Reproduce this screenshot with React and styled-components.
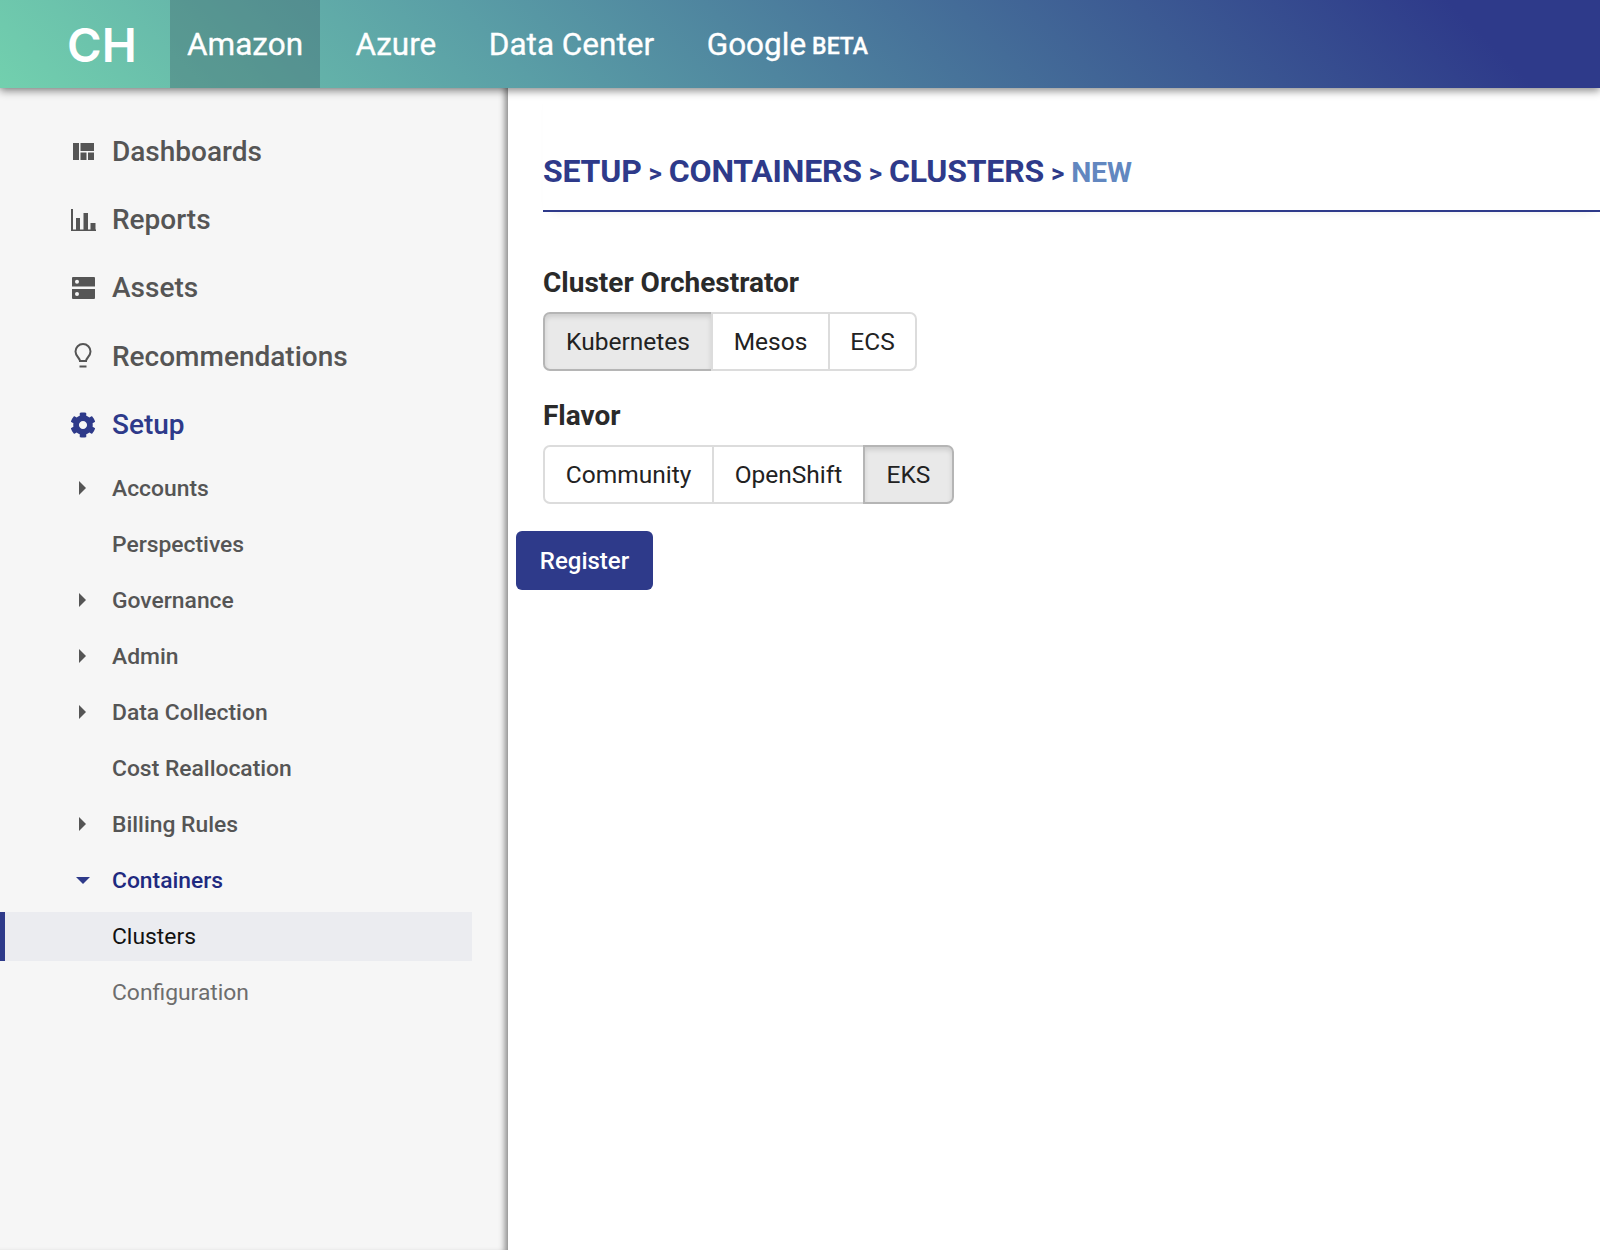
import React from "react";
import styled, { createGlobalStyle } from "styled-components";
import { FaCog } from "react-icons/fa";

const Global = createGlobalStyle`
  html, body {
    margin: 0;
    padding: 0;
    background: #fff;
    font-family: Roboto, "Liberation Sans", sans-serif;
  }
`;

const Page = styled.div`
  display: flex;
  flex-direction: column;
  min-height: 1250px;
  overflow: hidden;
`;

const Header = styled.header`
  position: relative;
  z-index: 2;
  display: flex;
  height: 88px;
  background: linear-gradient(45deg, #72d0ae 0%, #5a9ea6 32%, #2e3a8a 91%);
  box-shadow: 0 3px 8px rgba(0, 0, 0, 0.45);
`;

const Logo = styled.div`
  width: 170px;
  padding-left: 67px;
  box-sizing: border-box;
  display: flex;
  align-items: center;
  font-size: 47px;
  font-weight: 600;
  color: #fff;
  font-family: Inter, sans-serif;
`;

const Tab = styled.a`
  display: flex;
  align-items: center;
  padding: 0 17px;
  margin-right: 18.5px;
  font-size: 31.5px;
  color: #fff;
  -webkit-text-stroke: 0.3px #fff;
  background: ${(p) => (p.$active ? "rgba(60, 90, 100, 0.35)" : "transparent")};
  ${(p) => p.$active && "width: 150px; box-sizing: border-box;"}
`;

const Beta = styled.span`
  font-size: 23px;
  font-weight: 500;
  margin-left: 6px;
  margin-top: 5px;
`;

const Body = styled.div`
  display: flex;
  flex: 1;
`;

const Sidebar = styled.nav`
  position: relative;
  width: 508px;
  flex-shrink: 0;
  box-sizing: border-box;
  padding-top: 29px;
  background: #f6f6f6;
  box-shadow: inset -7px 0 6px -4px rgba(0, 0, 0, 0.45);
`;

const MainItem = styled.div`
  display: flex;
  align-items: center;
  height: 68.4px;
  padding-left: 70px;
  font-size: 28px;
  font-weight: 500;
  color: ${(p) => (p.$active ? "#2e3a8a" : "#555")};
`;

const IconSlot = styled.span`
  display: flex;
  justify-content: center;
  width: 26px;
  margin-right: 16px;
`;

const SubList = styled.div`
  padding-top: 1.5px;
  padding-right: 36px;
`;

const SubItem = styled.div`
  display: flex;
  align-items: center;
  height: 56px;
  font-size: 22.85px;
  font-weight: 500;
  color: #555;
  padding-left: 112px;
  position: relative;
  ${(p) => p.$open && "color: #1f2a80;"}
  ${(p) => p.$muted && "color: #6d6d6d; font-weight: 400;"}
  ${(p) =>
    p.$current &&
    `color: #111;
     font-weight: 400;
     height: 49px;
     margin: 3.5px 0;
     padding-left: 107px;
     background: #ebecf0;
     border-left: 5px solid #2e3a8a;`}
`;

const Arrow = styled.span`
  position: absolute;
  left: 79px;
  top: 50%;
  width: 0;
  height: 0;
  ${(p) =>
    p.$down
      ? `margin-top: -3px;
         margin-left: -3px;
         border-left: 7px solid transparent;
         border-right: 7px solid transparent;
         border-top: 7px solid #2e3a8a;`
      : `margin-top: -7px;
         border-top: 7px solid transparent;
         border-bottom: 7px solid transparent;
         border-left: 7px solid #555;`}
`;

const Main = styled.main`
  flex: 1;
  padding-left: 35px;
`;

const Title = styled.h1`
  margin: 0 0 55px;
  height: 124px;
  box-sizing: border-box;
  padding-top: 62px;
  border-bottom: 2px solid #2e3a8a;
  box-shadow: 0 6px 10px -8px rgba(0, 0, 0, 0.12);
  font-size: 32px;
  line-height: 42px;
  font-weight: 700;
  letter-spacing: -0.2px;
  color: #2e3a8a;
`;

const Sep = styled.span`
  font-size: 26px;
  margin: 0 7px;
`;

const New = styled.span`
  font-size: 28.5px;
  font-weight: 700;
  color: #6287c0;
`;

const Label = styled.div`
  font-size: 28px;
  line-height: 32px;
  font-weight: 700;
  color: #2a2a2a;
  margin: 2px 0 13px;
`;

const Group = styled.div`
  display: inline-flex;
  height: 59px;
  margin-bottom: 27px;
  vertical-align: top;
`;

const GroupButton = styled.button`
  width: ${(p) => p.$w}px;
  padding: 0;
  font-family: inherit;
  font-size: 24.5px;
  color: #222;
  background: ${(p) => (p.$on ? "#e9e9e9" : "#fff")};
  border: 2px solid ${(p) => (p.$on ? "#b5b5b5" : "#dcdcdc")};
  margin-left: -2px;
  box-shadow: ${(p) => (p.$on ? "inset 0 3px 5px rgba(0,0,0,0.12)" : "none")};
  &:first-child {
    margin-left: 0;
    border-radius: 7px 0 0 7px;
  }
  &:last-child {
    border-radius: 0 7px 7px 0;
  }
`;

const FormRow = styled.div``;

const Register = styled.button`
  display: block;
  width: 137px;
  height: 59px;
  margin: 0 0 0 -27px;
  padding: 0;
  font-family: inherit;
  font-size: 24px;
  font-weight: 500;
  color: #fff;
  background: #2e3a8a;
  border: 0;
  border-radius: 6px;
`;

const DashIcon = () => (
  <svg width="21" height="17" viewBox="0 0 21 17" fill="#555">
    <path d="M0 0h6v17H0zM7.500 0H21v8H7.500zM7.500 9.500h6V17h-6zM15 9.500h6V17h-6z" />
  </svg>
);

const ChartIcon = () => (
  <svg width="25" height="22" viewBox="0 0 25 22" fill="#555">
    <path d="M0 0h2v20.500h23V22H0zM5 9h4v12H5zM12.500 4H17v17h-4.500zM19.500 14h5v7h-5z" />
  </svg>
);

const ServerIcon = () => (
  <svg width="23" height="22" viewBox="0 0 23 22" fill="#555" fillRule="evenodd">
    <path d="M1 0h21a1 1 0 0 1 1 1v8.500H0V1a1 1 0 0 1 1-1zM5 2.700a2 2 0 1 0 0 4 2 2 0 0 0 0-4z" />
    <path d="M0 12h23v9a1 1 0 0 1-1 1H1a1 1 0 0 1-1-1zM5 15a2 2 0 1 0 0 4 2 2 0 0 0 0-4z" />
  </svg>
);

const BulbIcon = () => (
  <svg width="20" height="26" viewBox="0 0 20 26" fill="none" stroke="#555" strokeWidth="2">
    <path d="M7 18c0-3-4.500-4.500-4.500-9.500a7.500 7.500 0 0 1 15 0C17.500 13.500 13 15 13 18z" />
    <path d="M6.500 23.500h7" />
  </svg>
);

const subItems = [
  { name: "Accounts", arrow: true },
  { name: "Perspectives" },
  { name: "Governance", arrow: true },
  { name: "Admin", arrow: true },
  { name: "Data Collection", arrow: true },
  { name: "Cost Reallocation" },
  { name: "Billing Rules", arrow: true },
];

export default function App() {
  return (
    <Page>
      <Global />
      <Header>
        <Logo>CH</Logo>
        <Tab $active>Amazon</Tab>
        <Tab>Azure</Tab>
        <Tab>Data Center</Tab>
        <Tab>
          Google<Beta>BETA</Beta>
        </Tab>
      </Header>
      <Body>
        <Sidebar>
          <MainItem>
            <IconSlot><DashIcon /></IconSlot>
            Dashboards
          </MainItem>
          <MainItem>
            <IconSlot><ChartIcon /></IconSlot>
            Reports
          </MainItem>
          <MainItem>
            <IconSlot><ServerIcon /></IconSlot>
            Assets
          </MainItem>
          <MainItem>
            <IconSlot><BulbIcon /></IconSlot>
            Recommendations
          </MainItem>
          <MainItem $active>
            <IconSlot><FaCog size={26} color="#2e3a8a" /></IconSlot>
            Setup
          </MainItem>
          <SubList>
            {subItems.map((item) => (
              <SubItem key={item.name}>
                {item.arrow && <Arrow />}
                {item.name}
              </SubItem>
            ))}
            <SubItem $open>
              <Arrow $down />
              Containers
            </SubItem>
            <SubItem $current>Clusters</SubItem>
            <SubItem $muted>Configuration</SubItem>
          </SubList>
        </Sidebar>
        <Main>
          <Title>
            SETUP<Sep>&gt;</Sep>CONTAINERS<Sep>&gt;</Sep>CLUSTERS<Sep>&gt;</Sep>
            <New>NEW</New>
          </Title>
          <Label>Cluster Orchestrator</Label>
          <FormRow>
            <Group>
              <GroupButton $on $w={170}>Kubernetes</GroupButton>
              <GroupButton $w={119}>Mesos</GroupButton>
              <GroupButton $w={89}>ECS</GroupButton>
            </Group>
          </FormRow>
          <Label>Flavor</Label>
          <FormRow>
            <Group>
              <GroupButton $w={171}>Community</GroupButton>
              <GroupButton $w={153}>OpenShift</GroupButton>
              <GroupButton $on $w={91}>EKS</GroupButton>
            </Group>
          </FormRow>
          <Register>Register</Register>
        </Main>
      </Body>
    </Page>
  );
}
